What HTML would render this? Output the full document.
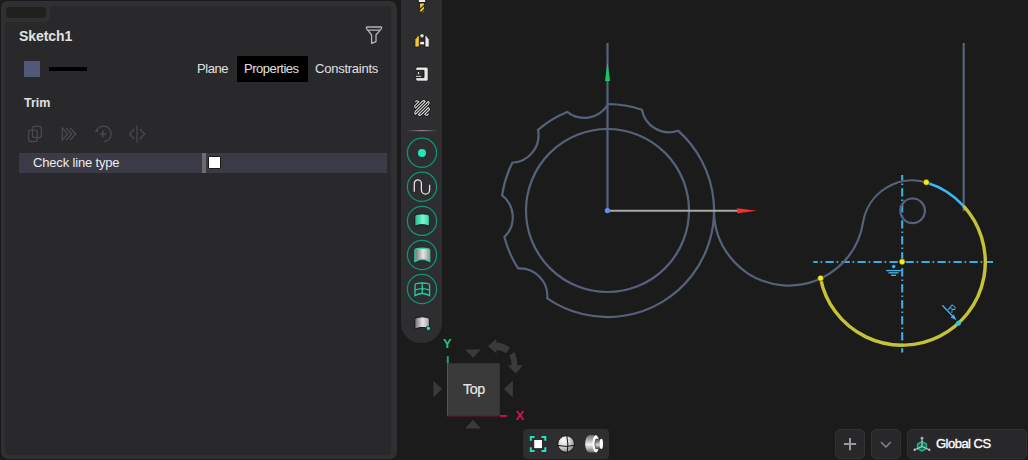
<!DOCTYPE html>
<html><head><meta charset="utf-8">
<style>
*{margin:0;padding:0;box-sizing:border-box}
html,body{width:1028px;height:460px;overflow:hidden;background:#1b1b1c;font-family:"Liberation Sans",sans-serif;position:relative}
.abs{position:absolute}
#frame{left:1px;top:1px;width:396px;height:458px;background:#303033;border-radius:7px;box-shadow:0 0 1px 0 rgba(0,0,0,0.3)}
#inner{left:5px;top:6px;width:386px;height:449px;background:#29292c;border-radius:4px}
#tab{left:1px;top:1px;width:49px;height:21px;background:#303033;border-radius:7px 0 5px 0}
#pill{left:6px;top:7px;width:40px;height:11px;background:#1f1f1b;border-radius:4px}
.t{position:absolute;z-index:5;white-space:nowrap;color:#e0e0e0;font-size:13px;line-height:16px}
#title{left:19px;top:28px;font-weight:bold;font-size:14px;color:#e2e2e2;letter-spacing:-0.08px}
#sw{left:24px;top:61px;width:16px;height:16px;background:#4f5a75}
#ln{left:49px;top:67px;width:38px;height:3.7px;background:#000}
#props{left:237px;top:56px;width:71px;height:26px;background:#000}
#row{left:19px;top:153px;width:368px;height:20px;background:#3b3b47}
#sep{left:202px;top:153px;width:4px;height:20px;background:#6b6b6b}
#cb{left:208px;top:156px;width:13px;height:13px;background:#fff;border:1px solid #1a1a1a;border-radius:1px}
#tb{left:401.2px;top:-30px;width:41.2px;height:372.5px;background:#2e2e31;border-radius:20px}
#vb{left:523px;top:429px;width:86px;height:30px;background:#2e2e30;border-radius:4px}
.btn{position:absolute;top:429px;height:30px;background:#28282b;border:1px solid #323235;border-radius:5px}
</style></head><body>
<div id="frame" class="abs"></div>
<div id="inner" class="abs"></div>
<div id="tab" class="abs"></div>
<div id="pill" class="abs"></div>
<div id="title" class="t">Sketch1</div>
<div id="sw" class="abs"></div>
<div id="ln" class="abs"></div>
<div id="props" class="abs"></div>
<div class="t" style="left:197px;top:61px;letter-spacing:-0.45px">Plane</div>
<div class="t" style="left:244px;top:61px;letter-spacing:-0.46px">Properties</div>
<div class="t" style="left:315px;top:61px;letter-spacing:-0.24px">Constraints</div>
<div class="t" style="left:24px;top:95px;font-weight:bold;font-size:12.5px">Trim</div>
<div id="row" class="abs"></div>
<div class="t" style="left:33px;top:155px;letter-spacing:-0.17px;color:#ececec">Check line type</div>
<div id="sep" class="abs"></div>
<div id="cb" class="abs"></div>
<div id="tb" class="abs"></div>
<div id="vb" class="abs"></div>
<div class="btn" style="left:835px;width:30px"></div>
<div class="btn" style="left:871px;width:30px"></div>
<div class="btn" style="left:907px;width:120px"></div>
<div class="t" style="left:936px;top:436px;color:#ffffff;font-size:13px;letter-spacing:-0.52px;-webkit-text-stroke:0.35px #fff">Global CS</div>
<div class="t" style="left:463px;top:380.5px;color:#e6e6e6;font-size:14.3px;letter-spacing:-0.45px;-webkit-text-stroke:0.2px #e6e6e6">Top</div>
<div class="t" style="left:443px;top:336px;color:#1fc27c;font-size:13px;font-weight:bold">Y</div>
<div class="t" style="left:515.5px;top:408px;color:#d4144e;font-size:13px;font-weight:bold">X</div>

<svg class="abs" style="left:0;top:0" width="1028" height="460" viewBox="0 0 1028 460">

<!-- toolbar icons -->
<g id="tbicons">
<rect x="418.3" y="-1" width="7.4" height="3.4" fill="#ececec" stroke="#111" stroke-width="0.8"/>
<path d="M419.6,3 H424.4 V11.2 L422,13.2 L419.6,11.2 Z" fill="#f2c935" stroke="#10131c" stroke-width="0.8"/>
<path d="M419.8,9.6 L424.4,5.2 M421,12.6 L424.4,9.4" stroke="#1c1c18" stroke-width="1.1"/>
<path d="M414.9,47 V39.6 L417.9,35.6 H419.3 V47 Z" fill="#f3c72e" stroke="#111" stroke-width="0.8"/>
<path d="M429.2,47 V39.6 L426.4,35.6 H425 V47 Z" fill="#e8e8e8" stroke="#111" stroke-width="0.8"/>
<circle cx="422" cy="35.8" r="2.1" fill="#e0e0e0" stroke="#111" stroke-width="0.6"/>
<rect x="419.9" y="41.6" width="4.4" height="3.2" fill="#f0f0f0" stroke="#111" stroke-width="0.6"/>
<path d="M416.8,67 H426.6 L428.2,68.6 V80 L427.2,81.2 H417 L415.8,80 V77.6 H424 V70.4 H415.8 V68.2 Z" fill="#e8e8e8" stroke="#111" stroke-width="0.9"/>
<rect x="417.8" y="70.9" width="1.5" height="3.6" fill="#e8e8e8" stroke="#111" stroke-width="0.5"/>
<rect x="415.6" y="75.6" width="5.8" height="1.4" fill="#e8e8e8" stroke="#111" stroke-width="0.5"/>
<g fill="none" stroke-linejoin="round" stroke-linecap="round">
<path d="M415.60,101.80 L415.80,101.60 Q416.17,99.98 418.90,101.60 L415.60,104.90 Q413.66,105.98 415.60,108.00 L422.00,101.60 Q424.02,99.66 425.10,101.60 L415.60,111.10 Q413.98,113.83 415.60,114.20 L428.20,101.60 Q429.87,101.81 428.40,104.50 L418.50,114.40 Q419.47,116.31 421.60,114.40 L428.40,107.60 Q430.37,109.50 428.40,110.70 L424.70,114.40 Q427.36,116.07 427.80,114.40 L428.40,113.80 " stroke="#151515" stroke-width="2.6"/>
<path d="M415.60,101.80 L415.80,101.60 Q416.17,99.98 418.90,101.60 L415.60,104.90 Q413.66,105.98 415.60,108.00 L422.00,101.60 Q424.02,99.66 425.10,101.60 L415.60,111.10 Q413.98,113.83 415.60,114.20 L428.20,101.60 Q429.87,101.81 428.40,104.50 L418.50,114.40 Q419.47,116.31 421.60,114.40 L428.40,107.60 Q430.37,109.50 428.40,110.70 L424.70,114.40 Q427.36,116.07 427.80,114.40 L428.40,113.80 " stroke="#e6e6e6" stroke-width="1.05"/>
</g>
<defs>
<linearGradient id="sepg" x1="0" x2="1"><stop offset="0" stop-color="#2e2e31"/><stop offset="0.5" stop-color="#8c8c8c"/><stop offset="1" stop-color="#2e2e31"/></linearGradient>
<linearGradient id="tg" x1="0" x2="1"><stop offset="0" stop-color="#17b88a"/><stop offset="0.55" stop-color="#7cf5d2"/><stop offset="1" stop-color="#2fd3a3"/></linearGradient>
<linearGradient id="gg" x1="0" x2="1"><stop offset="0" stop-color="#6f6f6f"/><stop offset="0.55" stop-color="#e6e6e6"/><stop offset="1" stop-color="#9a9a9a"/></linearGradient>
</defs>
<rect x="406" y="130" width="32" height="1.2" fill="url(#sepg)"/>
<g fill="none" stroke="#0f9576" stroke-width="1.25">
<circle cx="422" cy="152.8" r="14.6"/>
<circle cx="422" cy="186.8" r="14.6"/>
<circle cx="422" cy="220.9" r="14.6"/>
<circle cx="422" cy="255" r="14.6"/>
<circle cx="422" cy="289" r="14.6"/>
</g>
<circle cx="422" cy="153" r="4" fill="#1ee8b8"/>
<path d="M414.3,191.8 V183.5 A3.55,3.55 0 0 1 421.4,183.5 V190 A4.1,4.1 0 0 0 429.6,190 V184.8" fill="none" stroke="#e2e2e2" stroke-width="1.3"/>
<path d="M414.8,216.2 Q415,214.6 417,214.3 Q422,213.4 427.3,214.3 Q429.3,214.6 429.4,216.2 V226.2 Q422,223 414.8,226.2 Z" fill="url(#tg)" stroke="#111" stroke-width="0.9"/>
<path d="M414.9,250.4 Q415,248.8 417,248.6 Q422,247.8 427.6,248.6 Q429.6,248.8 429.7,250.4 V261.4 Q422,257.2 414.9,261.4 Z" fill="url(#gg)" stroke="#22d6a6" stroke-width="1.3"/>
<g fill="none" stroke="#1fcf9f" stroke-width="1.3">
<path d="M415,285.2 Q415.1,283.6 417.2,283.4 Q422,282.6 427.4,283.4 Q429.5,283.6 429.6,285.2 V295.6 Q422,291.4 415,295.6 Z"/>
<path d="M422.3,283 V293.4 M415,290.2 Q422,287.2 429.6,290.2"/>
</g>
<path d="M414.8,319.6 Q415,317.8 417,317.5 Q422,316.2 427.3,317.5 Q429.4,317.8 429.4,319.6 V329 Q422,325.6 414.8,329.2 Z" fill="url(#gg)" stroke="#111" stroke-width="0.9"/>
<circle cx="428.4" cy="328.4" r="2.2" fill="#1ee8b8" stroke="#1a0f14" stroke-width="0.8"/>
</g>


<!-- filter icon -->
<path d="M367.3,27 H380.7 Q382.2,27.2 381.3,28.6 L376,35 V41.6 L371.6,43.4 V35 L366.6,28.6 Q365.8,27.2 367.3,27 Z M367.5,30.2 H380.5" fill="none" stroke="#b4b4b4" stroke-width="1.3" stroke-linejoin="round"/>
<!-- trim icons -->
<g fill="none" stroke="#4a4a4d" stroke-width="1.3">
<rect x="28.6" y="130.2" width="8.6" height="11.3" rx="2"/>
<rect x="32.5" y="126.3" width="8.8" height="11.3" rx="2"/>
<path d="M62.3,128 V140 L67.6,134 Z"/>
<path d="M66.3,128 L71.7,134 L66.3,140 M70.2,128 L75.7,134 L70.2,140"/>
<path d="M96.5,130 A7.8,7.8 0 1 1 104,141.6"/>
<path d="M102.9,130.8 V137.2 M99.7,134 H106.1" stroke-width="1.6"/>
<path d="M134.2,129 L129.6,134 L134.2,139 M139.9,129 L144.6,134 L139.9,139"/>
<line x1="137" y1="125.3" x2="137" y2="142.6" stroke-width="1.8" stroke="#3f3f42"/>
</g>
<path d="M94.4,131.5 L98.3,128.2 L97.8,132.5 Z" fill="#4a4a4d"/>
<!-- nav cube -->
<g fill="#3a3a3a">
<rect x="447.2" y="363.2" width="52.6" height="53"/>
<path d="M465,349.4 H481 L473,357.8 Z"/>
<path d="M465,428.6 H481 L473,420.1 Z"/>
<path d="M433.4,380.7 V397.3 L442.1,389 Z"/>
<path d="M512.9,380.7 V397.3 L503.7,389 Z"/>
<path d="M487.8,346.3 L496.1,339.1 L496.4,342.6 Q504,342.8 510,347.8 L505.9,353.2 Q501.5,349.8 496.5,350 L496.6,353.6 Z"/>
<path d="M509.4,355.4 L514.3,352 Q517.2,357.5 517.3,365.3 H523 L515.7,373.6 L507.9,365.3 H511.5 Q511.6,359.6 509.4,355.4 Z"/>
</g>
<line x1="447.5" y1="363" x2="447.5" y2="416.3" stroke="#147a55" stroke-width="0.9"/>
<rect x="446.8" y="356.2" width="1.9" height="7" fill="#1fa872"/>
<line x1="447.2" y1="415.9" x2="500" y2="415.9" stroke="#7a1035" stroke-width="1"/>
<rect x="500" y="415" width="7.2" height="1.9" fill="#c8124c"/>
<!-- bottom view toolbar icons -->
<g fill="#25e0c0">
<path d="M529.8,436 H534.6 V438 H531.8 V440.8 H529.8 Z"/>
<path d="M546.3,436 H541.5 V438 H544.3 V440.8 H546.3 Z"/>
<path d="M529.8,452.1 H534.6 V450.1 H531.8 V447.3 H529.8 Z"/>
<path d="M546.3,452.1 H541.5 V450.1 H544.3 V447.3 H546.3 Z"/>
</g>
<rect x="533.8" y="439.5" width="8.6" height="9.2" fill="#fff" stroke="#151515" stroke-width="0.8"/>
<defs>
<radialGradient id="sph" cx="0.35" cy="0.3" r="0.8"><stop offset="0" stop-color="#ffffff"/><stop offset="0.5" stop-color="#cfcfcf"/><stop offset="1" stop-color="#7a7a7a"/></radialGradient>
<linearGradient id="cyl" x1="0" x2="1"><stop offset="0" stop-color="#8a8a8a"/><stop offset="0.5" stop-color="#f0f0f0"/><stop offset="1" stop-color="#777"/></linearGradient>
<linearGradient id="cylv" x1="0" y1="0" x2="0" y2="1"><stop offset="0" stop-color="#6a6a6a"/><stop offset="0.55" stop-color="#f4f4f4"/><stop offset="1" stop-color="#6a6a6a"/></linearGradient>
<linearGradient id="cylv2" x1="0" y1="0" x2="0" y2="1"><stop offset="0" stop-color="#4a4a4a"/><stop offset="0.6" stop-color="#d8d8d8"/><stop offset="1" stop-color="#4a4a4a"/></linearGradient>
</defs>
<circle cx="566.1" cy="444" r="8.3" fill="url(#sph)" stroke="#111" stroke-width="0.9"/>
<path d="M566.8,435.8 Q568.6,444 567.4,452.2 M557.9,445.4 Q566,447.4 574.3,445.4" fill="none" stroke="#151515" stroke-width="1"/>
<path d="M594,434.9 H589.2 Q585.2,436.6 585.2,443.8 Q585.2,451 589.2,452.6 H594 Z" fill="url(#cylv)"/>
<ellipse cx="595.8" cy="443.8" rx="3.3" ry="8.8" fill="#fafafa"/>
<ellipse cx="596.9" cy="443.9" rx="2.3" ry="5.4" fill="#3a3a3a"/>
<rect x="595.4" y="439.3" width="4.5" height="9.4" fill="url(#cylv2)"/>
<ellipse cx="601.3" cy="443.9" rx="1.75" ry="5.1" fill="#fafafa"/>
<!-- button icons -->
<path d="M850,438 V450.2 M843.9,444.1 H856.1" stroke="#9a9a9a" stroke-width="2"/>
<path d="M881,442 L885.9,446.9 L890.8,442" fill="none" stroke="#8a8a8a" stroke-width="1.4"/>
<g>
<path d="M922,441.6 L926.4,444 V448.6 L922,451 L917.6,448.6 V444 Z" fill="#0f6e52" stroke="#1cae82" stroke-width="1.6" stroke-linejoin="round"/>
<path d="M922,438.5 V446.4 M922,446.4 L914.6,449.8 M922,446.4 L929.4,449.8" stroke="#c8c8c8" stroke-width="1.1"/>
<circle cx="922" cy="438.2" r="1.4" fill="#aaa"/>
<path d="M913.6,451 L914,448 L916,450.5 Z M930.4,451 L930,448 L928,450.5 Z" fill="#ccc"/>
</g>

<g stroke="#42ace0" stroke-width="2.1" stroke-dasharray="8.3 2.9 1.6 3.2">
<line x1="813.3" y1="262" x2="993" y2="262" stroke-dashoffset="3.9"/>
<line x1="902.2" y1="175" x2="902.2" y2="352.6" stroke-dashoffset="2.8"/>
</g>
<!-- sketch geometry -->
<g fill="none" stroke="#56627a" stroke-width="2.2">
<path d="M678.00,130.67 A106.5,106.5 0 0 1 547.25,298.32 A27.6,27.6 0 0 0 518.13,268.43 A106.5,106.5 0 0 1 504.37,237.07 A27.6,27.6 0 0 0 502.08,195.40 A106.5,106.5 0 0 1 512.31,162.73 A27.6,27.6 0 0 0 537.98,129.82 A106.5,106.5 0 0 1 567.17,111.93 A27.6,27.6 0 0 0 608.15,104.00 A106.5,106.5 0 0 1 641.91,109.71 A27.6,27.6 0 0 0 678.00,130.67 Z"/>
<circle cx="607.5" cy="210.5" r="81.5"/>
<line x1="607.5" y1="43" x2="607.5" y2="210.5"/>
<line x1="963.7" y1="43" x2="963.7" y2="211"/>
<path d="M714,210.5 A75,75 0 0 0 863.06,222.36 A50,50 0 0 1 928.26,183.02"/>
<circle cx="912.6" cy="210.8" r="12.3"/>
</g>
<line x1="607.5" y1="210.8" x2="740" y2="210.8" stroke="#a9a9a6" stroke-width="2"/>
<path d="M737,208.3 L757,210.8 L737,213.3 Z" fill="#fb2d2d"/>
<path d="M605,81 L607.5,62 L610,81 Z" fill="#12cc66"/>
<circle cx="607.4" cy="210.6" r="2.7" fill="#6a8af0"/>

<!-- arcs on right circle -->
<path d="M927.2,182.7 A83.2,83.2 0 0 1 963.7,206.07" fill="none" stroke="#3fb6ee" stroke-width="2.5"/>
<path d="M963.7,206.07 A83.2,83.2 0 1 1 820.56,278.54" fill="none" stroke="#c6c236" stroke-width="3.4"/>

<g stroke="#45aee0" stroke-width="1.4" fill="none">
<line x1="886.2" y1="270.6" x2="901.2" y2="270.6"/>
<line x1="888.5" y1="272.8" x2="898.5" y2="272.8"/>
<line x1="891" y1="275.3" x2="896" y2="275.3"/>
<line x1="942.3" y1="305.2" x2="954" y2="317.6"/>
</g>
<circle cx="893.7" cy="266.6" r="1.8" fill="#45aee0"/>
<path d="M956.4,320.2 L950.6,317.6 L953.9,314.6 Z" fill="#45aee0"/>
<text x="-3.6" y="4" transform="translate(952.4,308.2) rotate(40)" font-family="Liberation Sans" font-size="10" fill="#45aee0">R</text>
<circle cx="958.4" cy="323.2" r="2.5" fill="#2fc8e0"/>
<circle cx="902.1" cy="261.8" r="3" fill="#f6ee12" stroke="#101030" stroke-width="0.5"/>
<circle cx="926.3" cy="182.3" r="3" fill="#f6ee12" stroke="#101030" stroke-width="0.5"/>
<circle cx="820.6" cy="278.2" r="3" fill="#f6ee12" stroke="#101030" stroke-width="0.5"/>
</svg>
</body></html>
